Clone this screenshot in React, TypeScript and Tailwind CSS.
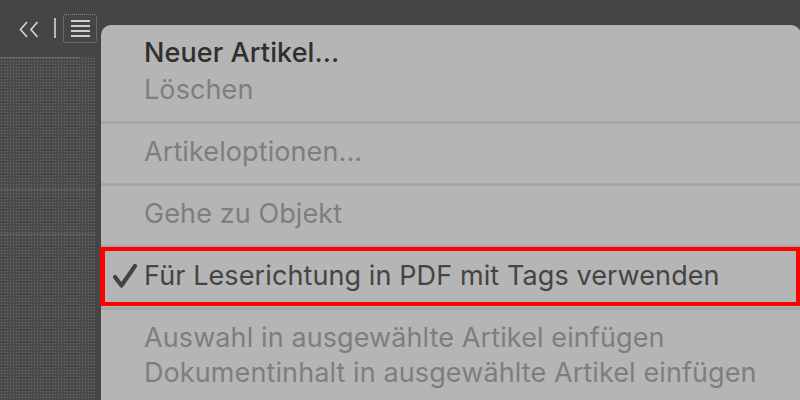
import React from "react";

function Check() {
  return (
    <svg width="26" height="26" viewBox="0 0 26 26" className="block">
      <path d="M3 14 L9.5 22.5 L23 3" fill="none" stroke="#444444" strokeWidth="4.2" strokeLinecap="round" strokeLinejoin="round" />
    </svg>
  );
}

function Sep() {
  return <div className="h-[3px] bg-[#a6a6a6]" />;
}

export default function App() {
  const font = { fontFamily: "Inter, 'Noto Sans', 'Liberation Sans', sans-serif" };
  return (
    <div className="relative w-[800px] h-[400px] overflow-hidden bg-[#454545]" style={font}>
      {/* left panel */}
      <div className="flex flex-col w-[100px] h-full">
        <div className="h-[57px] flex items-start">
          <svg width="20" height="17" viewBox="0 0 20 17" className="mt-[21px] ml-[19px]">
            <path d="M8 1 L1.5 8.5 L8 16 M18.5 1 L12 8.5 L18.5 16" fill="none" stroke="#d2d2d2" strokeWidth="1.7" />
          </svg>
          <div className="mt-[18px] ml-[15px] w-[2px] h-[20px] bg-[#b8b8b8]" />
          <div className="mt-[14px] ml-[7px] w-[34px] h-[29px] rounded-[3px] border border-dotted border-[#8a8a8a] flex flex-col items-center justify-center gap-[3px]">
            <div className="w-[19px] h-[2px] bg-[#cfcfcf]" />
            <div className="w-[19px] h-[2px] bg-[#cfcfcf]" />
            <div className="w-[19px] h-[2px] bg-[#cfcfcf]" />
            <div className="w-[19px] h-[2px] bg-[#cfcfcf]" />
          </div>
        </div>
        <div className="flex-1 flex">
          <div className="flex-1 flex flex-col bg-[#4a4a4a] bg-[radial-gradient(circle,#6e6e6e_0.8px,transparent_1px)] bg-[size:3px_3px]">
            <div className="h-[1px] bg-[#6a6a6a] w-[80px]" />
            <div className="h-[131px]" />
            <div className="h-[1px] bg-[#606060]" />
            <div className="h-[44px]" />
            <div className="h-[1px] bg-[#606060]" />
          </div>
          <div className="w-[5px] bg-[#454545]" />
        </div>
      </div>

      {/* dropdown menu */}
      <div className="absolute left-[101px] top-[25px] w-[700px] h-[400px] rounded-t-[10px] bg-[#b5b5b5] text-[27px] leading-[37px] tracking-[0.1px]">
        <div className="pt-[9px] pb-[13px] pl-[43px]">
          <div className="text-[#2f2f2f] font-medium">Neuer Artikel...</div>
          <div className="text-[#7e7e7e]">Löschen</div>
        </div>
        <Sep />
        <div className="pt-[9px] pb-[13px] pl-[43px] text-[#7e7e7e]">Artikeloptionen...</div>
        <Sep />
        <div className="pt-[9px] pb-[13px] pl-[43px] text-[#7e7e7e]">Gehe zu Objekt</div>
        <Sep />
        <div className="relative pt-[9px] pb-[13px] pl-[11px] flex items-center text-[#444444]">
          <div className="w-[32px] flex items-center"><Check /></div>
          <span>Für Leserichtung in PDF mit Tags verwenden</span>
          <div className="absolute -left-[1px] right-0 -top-[1px] bottom-[1px] border-[5px] border-[#ff0000] border-y-[4px]" />
        </div>
        <Sep />
        <div className="pt-[10px] pb-[11px] pl-[43px] text-[#7e7e7e] leading-[35px]">
          <div>Auswahl in ausgewählte Artikel einfügen</div>
          <div>Dokumentinhalt in ausgewählte Artikel einfügen</div>
        </div>
      </div>
    </div>
  );
}
